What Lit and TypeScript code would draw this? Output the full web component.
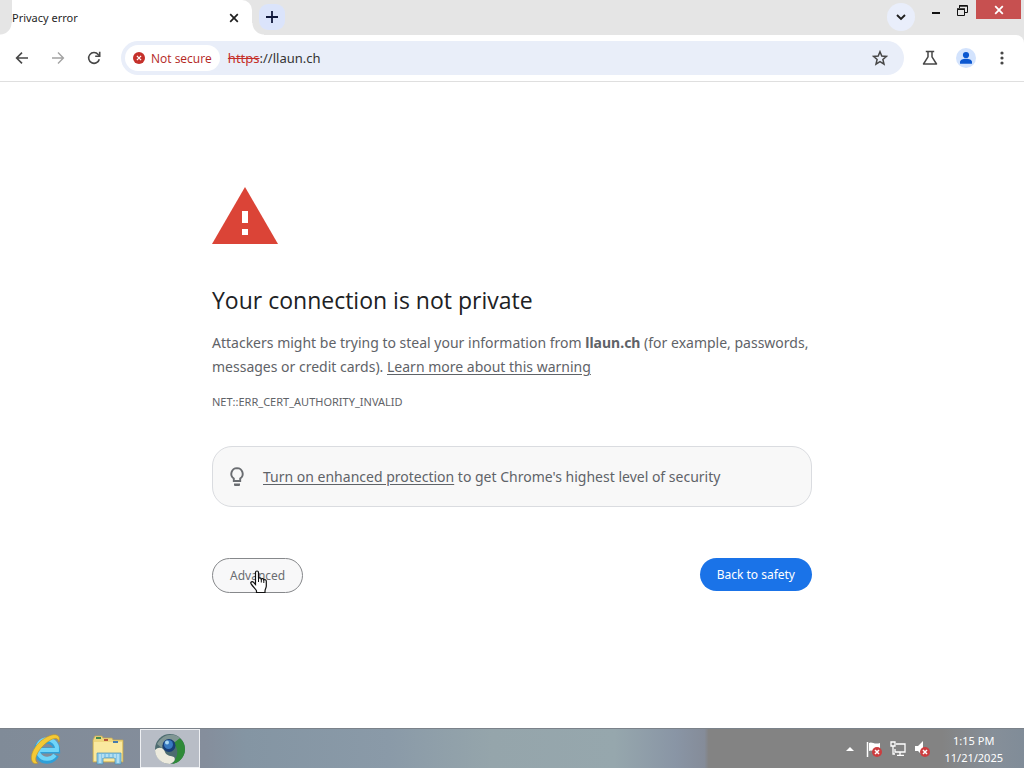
import { LitElement, html, css } from "lit";
import { customElement } from "lit/decorators.js";

@customElement("browser-chrome")
class BrowserChrome extends LitElement {
  static styles = css`
    :host { display: block; background: #e5e5e5; color: #1f1f1f; font-size: 12px; }
    button { font: inherit; border: 0; padding: 0; background: none; display: grid; place-items: center; color: inherit; }
    svg { display: block; }
    .strip { display: flex; height: 35px; align-items: flex-start; }
    .tab { position: relative; display: flex; align-items: center; justify-content: space-between; width: 240px; height: 35px; margin-left: 12px; background: #fff; border-radius: 0 10px 0 0; box-sizing: border-box; padding-right: 10px; }
    .tab::before, .tab::after { content: ""; position: absolute; bottom: 0; width: 12px; height: 12px; }
    .tab::before { right: 100%; background: radial-gradient(circle at 0 0, transparent 11px, #fff 12px); }
    .tab::after { left: 100%; background: radial-gradient(circle at 100% 0, transparent 11px, #fff 12px); }
    .tab button { width: 16px; height: 16px; }
    .title { font-size: 11px; }
    .new { width: 26px; height: 26px; margin: 4px 0 0 7px; border-radius: 9px; background: #dbe4fb; color: #10183c; }
    .search { width: 28px; height: 28px; margin: 3px 8px 0 auto; border-radius: 50%; background: #e9eefb; }
    .win { width: 26px; height: 19px; margin-top: 1px; }
    .win.shut { width: 45px; height: 19px; margin: 0 3px 0 1px; background: #c75050; color: #fff; }
    .bar { display: flex; align-items: center; height: 46px; background: #fff; border-bottom: 1px solid #dfdfdf; border-radius: 0 8px 0 0; padding: 0 10px; box-sizing: content-box; }
    .tool { width: 24px; height: 24px; margin-right: 12px; color: #474747; }
    .tool:last-child { margin-right: 0; }
    .tool.off { color: #a3a3a3; }
    .omni { flex: 1; display: flex; align-items: center; height: 34px; margin: 0 14px 0 3px; padding: 0 16px 0 4px; border-radius: 17px; background: #e9eef9; }
    .chip { display: flex; gap: 6px; align-items: center; height: 26px; padding: 0 8px; border-radius: 13px; background: #fff; color: #b3261e; margin-right: 8px; white-space: nowrap; font-family: "Open Sans", sans-serif; }
    .url { display: flex; flex: 1; font-size: 13px; min-width: 0; }
    .url s { color: #c5302a; }
    .url input { flex: 1; min-width: 0; font: inherit; color: #333; border: 0; padding: 0; background: none; outline: none; }
  `;
  render() {
    return html`
      <div class="strip">
        <div class="tab"><span class="title">Privacy error</span>
          <button aria-label="Close tab"><svg width="10" height="10" viewBox="0 0 10 10" fill="none" stroke="currentColor" stroke-width="1.7"><path d="M1.2 1.2l7.6 7.6M8.8 1.2L1.2 8.8"/></svg></button>
        </div>
        <button class="new" aria-label="New tab"><svg width="12" height="12" viewBox="0 0 12 12" stroke="currentColor" stroke-width="1.8"><path d="M6 0v12M0 6h12"/></svg></button>
        <button class="search" aria-label="Search tabs"><svg width="10" height="8" viewBox="0 0 10 8" fill="none" stroke="currentColor" stroke-width="1.9"><path d="M1 2l4 4 4-4"/></svg></button>
        <button class="win" aria-label="Minimize"><svg width="14" height="12" viewBox="0 0 14 12"><path d="M3 7h8v2H3z" fill="#111"/></svg></button>
        <button class="win" aria-label="Restore"><svg width="12" height="12" viewBox="0 0 12 12" fill="none" stroke="#111"><path d="M3.5 3V.5h8v7H9"/><path d="M3 1h8" stroke-width="1.4"/><path d="M1.5 4.5h7v6h-7z"/><path d="M1 4h8" stroke-width="1.5"/></svg></button>
        <button class="win shut" aria-label="Close"><svg width="10" height="10" viewBox="0 0 10 10" stroke="currentColor" stroke-width="1.8"><path d="M1.2 1.2l7.6 7.6M8.8 1.2L1.2 8.8"/></svg></button>
      </div>
      <div class="bar">
        <button class="tool" aria-label="Back"><svg width="14" height="14" viewBox="0 0 14 14" fill="none" stroke="currentColor" stroke-width="1.6"><path d="M13 7H2M7 1.6L1.6 7 7 12.4"/></svg></button>
        <button class="tool off" aria-label="Forward"><svg width="14" height="14" viewBox="0 0 14 14" fill="none" stroke="currentColor" stroke-width="1.4"><path d="M1 7h11M7 1.6L12.4 7 7 12.4"/></svg></button>
        <button class="tool" aria-label="Reload"><svg width="14" height="14" viewBox="0 0 14 14" fill="none" stroke="currentColor" stroke-width="1.6"><path d="M12.3 8.2A5.4 5.4 0 1 1 11.2 3.5L12.6 5"/><path d="M12.7.8v4.5H8.2"/></svg></button>
        <div class="omni">
          <button class="chip"><svg width="12" height="12" viewBox="0 0 12 12"><circle cx="6" cy="6" r="6" fill="#c5302a"/><path d="M3.9 3.9l4.2 4.2M8.1 3.9L3.9 8.1" stroke="#fff" stroke-width="1.2"/></svg>Not secure</button>
          <label class="url"><s>https</s><input aria-label="Address" value="://llaun.ch"></label>
          <button aria-label="Bookmark"><svg width="16" height="16" viewBox="0 0 16 16" fill="none" stroke="#474747" stroke-width="1.5"><path d="M8 1.7l1.8 4.3 4.6.4-3.5 3.1 1.1 4.6L8 11.7l-4 2.4 1.1-4.6L1.6 6.4 6.2 6z"/></svg></button>
        </div>
        <button class="tool" aria-label="Labs"><svg width="16" height="16" viewBox="0 0 16 16" fill="none" stroke="currentColor" stroke-width="1.5" stroke-linejoin="round"><path d="M3.8 1.5h8.4M6 1.5v5.3L1.5 14h13L10 6.8V1.5"/></svg></button>
        <button class="tool" aria-label="Profile"><svg width="20" height="20" viewBox="0 0 20 20"><circle cx="10" cy="10" r="10" fill="#d3e3fd"/><circle cx="10" cy="7" r="3.1" fill="#0b57d0"/><path d="M4 15.8v-1.6c0-2.3 3-3.4 6-3.4s6 1.1 6 3.4v1.6z" fill="#0b57d0"/></svg></button>
        <button class="tool" aria-label="Menu"><svg width="4" height="14" viewBox="0 0 4 14" fill="currentColor"><circle cx="2" cy="2" r="1.6"/><circle cx="2" cy="7" r="1.6"/><circle cx="2" cy="12" r="1.6"/></svg></button>
      </div>`;
  }
}

@customElement("privacy-warning")
class PrivacyWarning extends LitElement {
  static styles = css`
    :host { display: block; color: #5f6368; font-size: 14px; line-height: 24px; }
    .page { max-width: 600px; margin: 0 auto; padding: 105px 0 0; }
    .alert { display: block; }
    h1 { margin: 40px 0 0; font-family: "Open Sans", sans-serif; font-size: 23px; line-height: 32px; font-weight: 400; color: #202124; }
    p { margin: 15px 0 0; }
    a { color: inherit; text-underline-offset: 2px; }
    .code { margin: 11px 0 0; font-size: 11px; }
    .tip { display: flex; align-items: center; gap: 18px; margin-top: 32px; padding: 18px 16px 17px; border: 1px solid #dadce0; border-radius: 20px; background: #f8f8f8; }
    .row { display: flex; justify-content: space-between; align-items: flex-start; margin-top: 51px; }
    button { font: inherit; font-size: 12px; line-height: 17px; padding: 8px 17px; border: 0; border-radius: 18px; background: #1a73e8; color: #fff; }
    button.adv { position: relative; border: 1px solid #86888b; background: #f8f8f9; color: #6a6d71; }
    .hand { position: absolute; left: 36px; top: 11px; }
  `;
  render() {
    return html`
      <main class="page">
        <svg class="alert" width="66" height="57" viewBox="0 0 66 57"><path d="M33 0L66 57H0z" fill="#db4437"/><path d="M30 24h6v12h-6zM30 42h6v6h-6z" fill="#fff"/></svg>
        <h1>Your connection is not private</h1>
        <p>Attackers might be trying to steal your information from <strong>llaun.ch</strong> (for example, passwords, messages or credit cards). <a href="#">Learn more about this warning</a></p>
        <div class="code">NET::ERR_CERT_AUTHORITY_INVALID</div>
        <div class="tip">
          <svg width="16" height="20" viewBox="0 0 16 20"><path d="M8 1.1a5.7 5.7 0 0 0-3.2 10.4V14h6.4v-2.5A5.7 5.7 0 0 0 8 1.1z" fill="none" stroke="#6a6d71" stroke-width="1.9"/><path d="M5 16.6h6v1.4a1 1 0 0 1-1 1H6a1 1 0 0 1-1-1z" fill="#6a6d71"/></svg>
          <span><a href="#">Turn on enhanced protection</a> to get Chrome's highest level of security</span>
        </div>
        <div class="row">
          <button class="adv">Advanced<svg class="hand" width="19" height="24" viewBox="0 0 19 24"><path d="M6.5 14.5V2.5c0-2 3-2 3 0v6c.5-1 2.500-.8 2.800.6.600-.9 2.300-.6 2.500.8.900-.7 2.500-.2 2.500 1.400v4.700c0 2-1.300 3-1.300 5v1.500H7.500V21c0-1.500-3.500-4-5.500-7.400-.9-1.700 1.300-2.600 2.600-1.200z" fill="#fff" stroke="#111" stroke-width="1.2"/><path d="M9.5 8v4M12.3 9v3.500M14.800 10v3" stroke="#111"/></svg></button>
          <button>Back to safety</button>
        </div>
      </main>`;
  }
}

@customElement("task-bar")
class TaskBar extends LitElement {
  static styles = css`
    :host { display: flex; height: 40px; color: #fff; font-size: 11px; background: linear-gradient(90deg, #808b98 0%, #858e9c 20%, #8495a3 24%, #8a9aa8 38%, #95a5ab 48%, #96a7ad 60%, #8995a5 66%, #858c99 68.8%, #838383 69.2%, #838383 92%, #868f99 97%, #808c98 100%); border-top: 1px solid #7b828a; box-sizing: border-box; }
    button { font: inherit; color: inherit; border: 0; padding: 0; background: none; display: grid; place-items: center; }
    .apps { display: flex; margin-left: 16px; gap: 2px; }
    .apps button { width: 60px; height: 39px; box-sizing: border-box; }
    .apps .on { border: 1px solid #eef0f3; background: #b8bdc6; }
    .tray { display: flex; align-items: center; gap: 7px; margin-left: auto; padding-right: 21px; }
    .tray button { height: 24px; }
    .tray .more { margin-right: 4px; }
    .tray .clock { height: 39px; margin-left: 6px; line-height: 17px; display: block; text-align: center; }
    .clock span { display: block; }
  `;
  render() {
    return html`
      <nav class="apps">
        <button aria-label="Internet Explorer"><svg width="34" height="34" viewBox="0 0 34 34"><path d="M27 23A10 10 0 1 1 28 18.5H10" fill="none" stroke="#2f9fd8" stroke-width="6.2"/><path d="M26 23A9.8 9.8 0 1 1 28 18H10" fill="none" stroke="#70d5f8" stroke-width="4"/><path d="M30 10C32 3 27 1 20 4 8 9 0 22 3 29c1 3 4 3 6 2-5-2-1-12 7-19C23 6 29 4 30 10z" fill="#f4c935" stroke="#bd9425" stroke-width=".6"/></svg></button>
        <button aria-label="File Explorer"><svg width="34" height="34" viewBox="0 0 34 34"><path d="M2 8l2-4h7l1 2h9l1 2h10v22H2z" fill="#efd77d" stroke="#c9a94d" stroke-width=".7"/><path d="M3 10h28v19H3z" fill="#fae99f"/><path d="M5 5h5v2H5z" fill="#448a51"/><path d="M13 7h4v2h-4z" fill="#b85538"/><path d="M22 9h5v2h-5z" fill="#487bab"/><path d="M6 21h24v11h-6v-6H12v6H6z" fill="#8bc9e8" stroke="#4a91b6" stroke-width=".7"/><path d="M9 22v9M12 22v4M16 22v3M20 22v3M24 22v4M27 22v9" stroke="#d8f3fc"/></svg></button>
        <button class="on" aria-label="Chromium"><svg width="32" height="32" viewBox="0 0 32 32"><circle cx="16" cy="16" r="15" fill="#4d6c70"/><path d="M21 5c6-2 10 5 10 11a15 15 0 0 1-13 15c5-5 8-14 2-20z" fill="#2f8a38"/><path d="M1 17c4-4 9-2 10 2s7 4 9 5c2 3 0 5-4 7C8 31 1 25 1 17z" fill="#eceadd"/><path d="M3 11C8 1 20-1 26 5l-5 4c-6-3-13 1-13 6z" fill="#809694"/><circle cx="15" cy="12.500" r="6.500" fill="#183e78"/><circle cx="14.500" cy="11.500" r="4.500" fill="#397ac1"/><circle cx="13" cy="9.500" r="2" fill="#a9d7f3"/></svg></button>
      </nav>
      <div class="tray">
        <button class="more" aria-label="Show hidden icons"><svg width="8" height="5" viewBox="0 0 8 5"><path d="M0 5l4-4 4 4z" fill="#fff"/></svg></button>
        <button aria-label="Action Center"><svg width="18" height="18" viewBox="0 0 18 18"><path d="M2.500 2v15" stroke="#fff" stroke-width="1.500"/><path d="M4 3c3-2 5 2 11 0v8c-5 2-8-2-11 0z" fill="#fff"/><circle cx="12" cy="12" r="5" fill="#cc3d3f"/><path d="M10 10l4 4m0-4l-4 4" stroke="#fff" stroke-width="1.500"/></svg></button>
        <button aria-label="Network"><svg width="16" height="16" viewBox="0 0 16 16" fill="none" stroke="#fff" stroke-width="1.300"><path d="M6 3h9v8H5V8M10 11v3M7 14.300h7"/><path d="M1 1h4v4H1zM3 5v8h2"/></svg></button>
        <button aria-label="Volume"><svg width="18" height="18" viewBox="0 0 18 18"><path d="M2 6h3l5-5v15l-5-5H2z" fill="#fff"/><circle cx="12" cy="12" r="5" fill="#cc3d3f"/><path d="M10 10l4 4m0-4l-4 4" stroke="#fff" stroke-width="1.500"/></svg></button>
        <button class="clock"><span>1:15 PM</span><span>11/21/2025</span></button>
      </div>`;
  }
}

@customElement("app-root")
class AppRoot extends LitElement {
  static styles = css`
    :host { display: flex; flex-direction: column; min-height: 100vh; background: #fff; font-family: "Noto Sans", "Open Sans", sans-serif; }
    privacy-warning { flex: 1; }
  `;
  render() {
    return html`<browser-chrome></browser-chrome><privacy-warning></privacy-warning><task-bar></task-bar>`;
  }
}
